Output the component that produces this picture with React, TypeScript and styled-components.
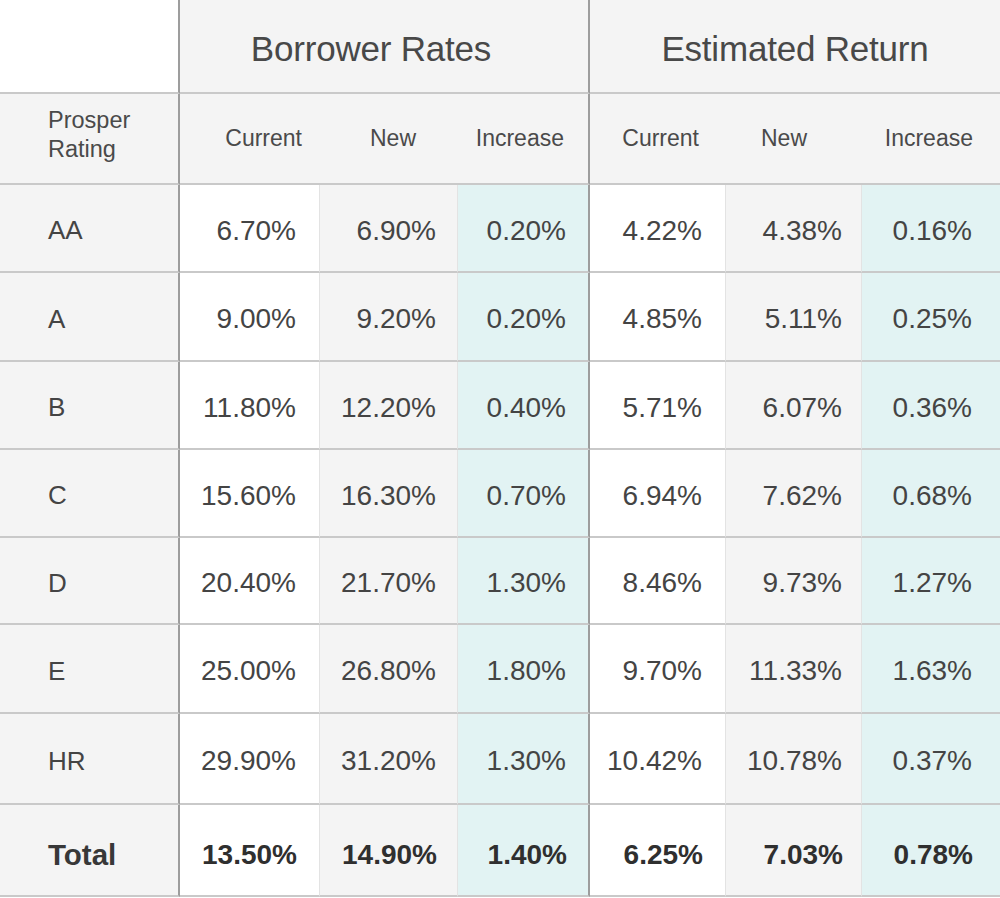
import React from "react";
import styled, { createGlobalStyle, css } from "styled-components";

const GlobalStyle = createGlobalStyle`
  html, body { margin: 0; padding: 0; background: #ffffff; }
  body { font-family: "Liberation Sans", Arial, Helvetica, sans-serif; }
`;

const LINE = "#c9c9c9";
const THICK = "#9d9d9d";
const THIN = "#e3e3e3";
const GRAY = "#f4f4f4";
const TEAL = "#e2f3f3";
const TEXT = "#444444";

type Tone = "white" | "gray" | "teal";
type Edge = "none" | "thin" | "thick";

const toneBg: Record<Tone, string> = { white: "#ffffff", gray: GRAY, teal: TEAL };
const edgeBorder: Record<Edge, string> = {
  none: "none",
  thin: `1px solid ${THIN}`,
  thick: `2px solid ${THICK}`,
};

const Table = styled.div`
  display: grid;
  width: 1000px;
  grid-template-columns: 180px 140px 138px 132px 136px 136px 138px;
  grid-template-rows: 94px 91px 88px 89px 88px 88px 87px 89px 91px 92px;
  box-sizing: border-box;
  color: ${TEXT};
`;

const cellBase = css`
  box-sizing: border-box;
  display: flex;
  align-items: center;
  border-bottom: 2px solid ${LINE};
`;

const Corner = styled.div`
  ${cellBase};
  background: #ffffff;
  border-right: 2px solid ${THICK};
`;

const GroupHeader = styled.div<{ $edge: Edge; $shift: number }>`
  ${cellBase};
  grid-column: span 3;
  justify-content: center;
  background: ${GRAY};
  border-right: ${(p) => edgeBorder[p.$edge]};
  padding-top: 6px;
  padding-right: ${(p) => p.$shift}px;
  font-size: 35px;
  font-weight: 400;
  color: #484848;
  letter-spacing: -0.2px;
`;

const RatingHeader = styled.div`
  ${cellBase};
  background: ${GRAY};
  border-right: 2px solid ${THICK};
  padding-left: 48px;
  padding-bottom: 8px;
  font-size: 23.5px;
  line-height: 29px;
  color: #4a4a4a;
`;

const SubHeader = styled.div<{ $edge: Edge; $pad: number }>`
  ${cellBase};
  justify-content: flex-end;
  background: ${GRAY};
  border-right: ${(p) => edgeBorder[p.$edge]};
  padding-right: ${(p) => p.$pad}px;
  font-size: 23px;
  color: #4a4a4a;
`;

const RowLabel = styled.div<{ $bold?: boolean }>`
  ${cellBase};
  background: ${GRAY};
  border-right: 2px solid ${THICK};
  padding-left: 48px;
  padding-top: ${(p) => (p.$bold ? "10px" : "5px")};
  font-size: ${(p) => (p.$bold ? "29.5px" : "26px")};
  font-weight: ${(p) => (p.$bold ? 700 : 400)};
  color: ${(p) => (p.$bold ? "#383838" : TEXT)};
`;

const Value = styled.div<{ $tone: Tone; $edge: Edge; $pad: number; $bold?: boolean }>`
  ${cellBase};
  justify-content: flex-end;
  background: ${(p) => toneBg[p.$tone]};
  border-right: ${(p) => edgeBorder[p.$edge]};
  padding-right: ${(p) => p.$pad}px;
  padding-top: ${(p) => (p.$bold ? "10px" : "5px")};
  font-size: 28px;
  font-weight: ${(p) => (p.$bold ? 700 : 400)};
  color: ${(p) => (p.$bold ? "#2f2f2f" : TEXT)};
`;

type ColSpec = { tone: Tone; edge: Edge; pad: number; head: string; headPad: number };

const columns: ColSpec[] = [
  { tone: "white", edge: "thin", pad: 23, head: "Current", headPad: 18 },
  { tone: "gray", edge: "thin", pad: 21, head: "New", headPad: 42 },
  { tone: "teal", edge: "thick", pad: 22, head: "Increase", headPad: 24 },
  { tone: "white", edge: "thin", pad: 23, head: "Current", headPad: 27 },
  { tone: "gray", edge: "thin", pad: 19, head: "New", headPad: 55 },
  { tone: "teal", edge: "none", pad: 28, head: "Increase", headPad: 27 },
];

const rows: { label: string; values: string[] }[] = [
  { label: "AA", values: ["6.70%", "6.90%", "0.20%", "4.22%", "4.38%", "0.16%"] },
  { label: "A", values: ["9.00%", "9.20%", "0.20%", "4.85%", "5.11%", "0.25%"] },
  { label: "B", values: ["11.80%", "12.20%", "0.40%", "5.71%", "6.07%", "0.36%"] },
  { label: "C", values: ["15.60%", "16.30%", "0.70%", "6.94%", "7.62%", "0.68%"] },
  { label: "D", values: ["20.40%", "21.70%", "1.30%", "8.46%", "9.73%", "1.27%"] },
  { label: "E", values: ["25.00%", "26.80%", "1.80%", "9.70%", "11.33%", "1.63%"] },
  { label: "HR", values: ["29.90%", "31.20%", "1.30%", "10.42%", "10.78%", "0.37%"] },
];

const total = { label: "Total", values: ["13.50%", "14.90%", "1.40%", "6.25%", "7.03%", "0.78%"] };

export default function App() {
  return (
    <>
      <GlobalStyle />
      <Table>
        <Corner />
        <GroupHeader $edge="thick" $shift={26}>Borrower Rates</GroupHeader>
        <GroupHeader $edge="none" $shift={0}>Estimated Return</GroupHeader>

        <RatingHeader>
          Prosper
          <br />
          Rating
        </RatingHeader>
        {columns.map((c, i) => (
          <SubHeader key={i} $edge={c.edge === "thin" ? "none" : c.edge} $pad={c.headPad}>
            {c.head}
          </SubHeader>
        ))}

        {rows.map((r) => (
          <React.Fragment key={r.label}>
            <RowLabel>{r.label}</RowLabel>
            {r.values.map((v, i) => (
              <Value key={i} $tone={columns[i].tone} $edge={columns[i].edge} $pad={columns[i].pad}>
                {v}
              </Value>
            ))}
          </React.Fragment>
        ))}

        <RowLabel $bold>{total.label}</RowLabel>
        {total.values.map((v, i) => (
          <Value key={i} $bold $tone={columns[i].tone} $edge={columns[i].edge} $pad={columns[i].pad - 1}>
            {v}
          </Value>
        ))}
      </Table>
    </>
  );
}
